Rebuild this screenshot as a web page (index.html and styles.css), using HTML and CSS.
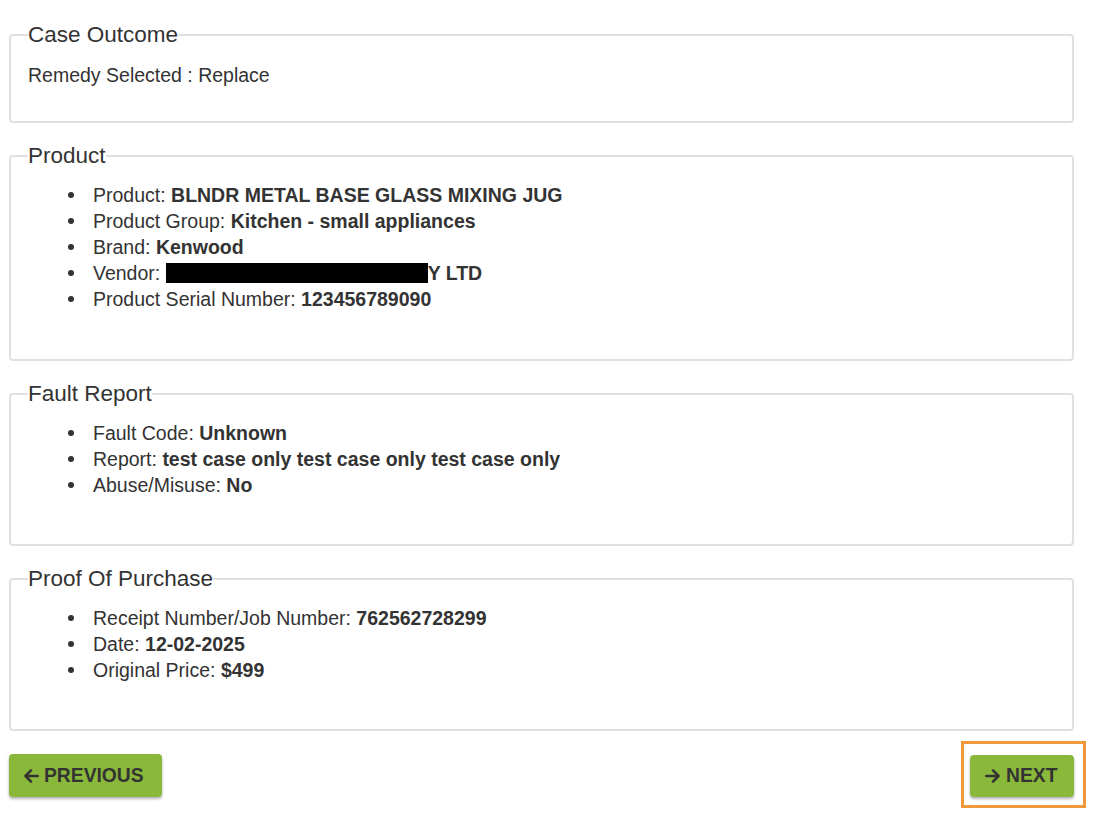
FILE: index.html
```html
<!DOCTYPE html>
<html lang="en">
<head>
<meta charset="utf-8">
<title>Case Summary</title>
<link rel="stylesheet" href="styles.css">
</head>
<body>
<main class="page">
  <fieldset class="panel panel-short">
    <legend>Case Outcome</legend>
    <div class="plain">Remedy Selected : Replace</div>
  </fieldset>

  <fieldset class="panel panel-tall">
    <legend>Product</legend>
    <ul class="details">
      <li>Product: <b>BLNDR METAL BASE GLASS MIXING JUG</b></li>
      <li>Product Group: <b>Kitchen - small appliances</b></li>
      <li>Brand: <b>Kenwood</b></li>
      <li>Vendor: <b><span class="redact" aria-label="redacted"></span>Y LTD</b></li>
      <li>Product Serial Number: <b>123456789090</b></li>
    </ul>
  </fieldset>

  <fieldset class="panel panel-mid">
    <legend>Fault Report</legend>
    <ul class="details">
      <li>Fault Code: <b>Unknown</b></li>
      <li>Report: <b>test case only test case only test case only</b></li>
      <li>Abuse/Misuse: <b>No</b></li>
    </ul>
  </fieldset>

  <fieldset class="panel panel-mid">
    <legend>Proof Of Purchase</legend>
    <ul class="details">
      <li>Receipt Number/Job Number: <b>762562728299</b></li>
      <li>Date: <b>12-02-2025</b></li>
      <li>Original Price: <b>$499</b></li>
    </ul>
  </fieldset>

  <div class="actions">
    <button class="btn btn-prev" type="button">
      <svg class="arrow" viewBox="0 0 16 16" aria-hidden="true"><path d="M14 8H3M8 3L3 8l5 5" fill="none" stroke="currentColor" stroke-width="2.2" stroke-linecap="round" stroke-linejoin="round"/></svg>
      PREVIOUS
    </button>
    <div class="highlight">
      <button class="btn btn-next" type="button">
        <svg class="arrow" viewBox="0 0 16 16" aria-hidden="true"><path d="M2 8h11M8 3l5 5-5 5" fill="none" stroke="currentColor" stroke-width="2.2" stroke-linecap="round" stroke-linejoin="round"/></svg>
        NEXT
      </button>
    </div>
  </div>
</main>
</body>
</html>
```

FILE: styles.css
```css
* { box-sizing: border-box; }

html, body {
  margin: 0;
  padding: 0;
  background: #fff;
}

body {
  font-family: "Liberation Sans", Arial, Helvetica, sans-serif;
  color: #333;
  font-size: 19.5px;
}

.page {
  width: 1065px;
  margin-left: 9px;
  padding-top: 22px;
}

.panel {
  margin: 0 0 20px;
  border: 2px solid #e0e0e0;
  border-radius: 4px;
  padding: 0 17px 0 17px;
}

.panel legend {
  font-size: 22.5px;
  line-height: 26px;
  padding: 0;
  margin-left: 0;
  color: #333;
}

.panel-short { height: 101px; }
.panel-tall { height: 218px; }
.panel-mid { height: 165px; }

.plain {
  margin-top: 14px;
  line-height: 26px;
}

.details {
  margin: 13px 0 0;
  padding-left: 64px;
  line-height: 26px;
  list-style: none;
}

.details li {
  position: relative;
  padding-left: 1px;
}

.details li::before {
  content: "";
  position: absolute;
  left: -24px;
  top: 10px;
  width: 6px;
  height: 6px;
  border-radius: 50%;
  background: #333;
}

.details b { font-weight: bold; }

.redact {
  background: #000;
  display: inline-block;
  width: 262px;
  height: 20px;
  vertical-align: -3px;
}

.actions {
  display: flex;
  justify-content: space-between;
  align-items: flex-start;
  margin-top: 23px;
}

.btn {
  display: inline-flex;
  align-items: center;
  gap: 4px;
  background: #8ab83a;
  color: #333;
  border: none;
  border-radius: 4px;
  font-family: "Liberation Sans", Arial, Helvetica, sans-serif;
  font-weight: bold;
  font-size: 19.3px;
  height: 43px;
  box-shadow: 0 2px 3px rgba(0, 0, 0, 0.3);
  cursor: pointer;
}

.btn-prev {
  width: 153px;
  padding: 0 0 0 13px;
}

.btn-next {
  width: 104px;
  padding: 0 0 0 14px;
  height: 42px;
}

.arrow {
  width: 18px;
  height: 18px;
}

.highlight {
  border: 3px solid #f0983a;
  padding: 11px 9px 8px 6px;
  margin-top: -13px;
  margin-right: -12px;
}
```
